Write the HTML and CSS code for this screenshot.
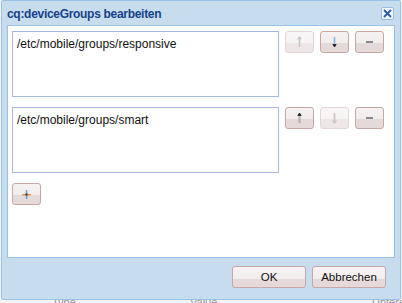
FILE: index.html
```html
<!DOCTYPE html>
<html>
<head>
<meta charset="utf-8">
<link rel="stylesheet" href="styles.css">
</head>
<body>
<div class="page">
  <div class="win">
    <div class="head">
      <span class="title">cq:deviceGroups bearbeiten</span>
      <span class="close">
        <svg width="11" height="11" viewBox="0 0 11 11"><path d="M2 2 L9 9 M9 2 L2 9" stroke="#2a5aa8" stroke-width="1.8" fill="none"/></svg>
      </span>
    </div>
    <div class="body">
      <div class="row">
        <div class="field">/etc/mobile/groups/responsive</div>
        <div class="tools">
          <span class="btn dis"><svg width="7" height="12" viewBox="0 0 7 12"><path d="M3.5 1 L3.5 11" stroke="#c9c4c4" stroke-width="1.6"/><path d="M1.5 3.5 L3.5 1 L5.5 3.5" stroke="#c9c4c4" stroke-width="1.2" fill="none"/></svg></span>
          <span class="btn"><svg width="7" height="12" viewBox="0 0 7 12"><path d="M3.5 1 L3.5 9" stroke="#8fb6dc" stroke-width="1.6"/><path d="M1.8 8.5 L3.5 11 L5.2 8.5 Z" fill="#222" stroke="#222" stroke-width="0.8"/></svg></span>
          <span class="btn"><svg width="7" height="4" viewBox="0 0 7 4"><rect x="0" y="1" width="7" height="2" fill="#8a8a8a"/></svg></span>
        </div>
      </div>
      <div class="row">
        <div class="field">/etc/mobile/groups/smart</div>
        <div class="tools">
          <span class="btn"><svg width="7" height="12" viewBox="0 0 7 12"><path d="M3 3 L3 11" stroke="#e8a048" stroke-width="1"/><path d="M4 3 L4 11" stroke="#7fa9d6" stroke-width="1"/><path d="M1.8 3.5 L3.5 1 L5.2 3.5 Z" fill="#222" stroke="#222" stroke-width="0.8"/></svg></span>
          <span class="btn dis"><svg width="7" height="12" viewBox="0 0 7 12"><path d="M3.5 1 L3.5 11" stroke="#c9c4c4" stroke-width="1.6"/><path d="M1.5 8.5 L3.5 11 L5.5 8.5" stroke="#c9c4c4" stroke-width="1.2" fill="none"/></svg></span>
          <span class="btn"><svg width="7" height="4" viewBox="0 0 7 4"><rect x="0" y="1" width="7" height="2" fill="#8a8a8a"/></svg></span>
        </div>
      </div>
      <span class="btn add"><svg width="9" height="9" viewBox="0 0 9 9"><rect x="0" y="4" width="9" height="1.5" fill="#e59a3c"/><rect x="3.8" y="0" width="1.5" height="9" fill="#6f9fd2"/><rect x="3.5" y="3.5" width="2" height="2" fill="#333"/></svg></span>
    </div>
    <div class="foot">
      <span class="fbtn">OK</span>
      <span class="fbtn">Abbrechen</span>
    </div>
  </div>
  <div class="under">
    <span class="u1">Type</span>
    <span class="u2">Value</span>
    <span class="u3">Untere</span>
  </div>
</div>
</body>
</html>
```
FILE: styles.css
```css
* { box-sizing: border-box; }
html, body { margin: 0; padding: 0; }
body {
  background: #ffffff;
  font-family: "Liberation Sans", Arial, sans-serif;
  width: 402px;
  height: 303px;
  overflow: hidden;
}
.page {
  position: relative;
  width: 402px;
  height: 303px;
  background: #f4f4f4;
}
.win {
  position: relative;
  z-index: 1;
  margin-left: 1px;
  width: 400px;
  height: 300px;
  background: #c7ddee;
  border: 1px solid #99c2e8;
  border-radius: 2px;
  display: flex;
  flex-direction: column;
}
.head {
  height: 24px;
  display: flex;
  align-items: center;
  justify-content: space-between;
  padding: 0 5px 0 5px;
}
.title {
  font-weight: bold;
  font-size: 12px;
  letter-spacing: -0.3px;
  color: #15428b;
  padding-top: 1px;
}
.close {
  width: 13px;
  height: 13px;
  background: #f2f7fc;
  border: 1px solid #99bbe8;
  border-radius: 2px;
  display: flex;
  align-items: center;
  justify-content: center;
  margin-right: 1px;
}
.body {
  margin: 0 5px 0 5px;
  height: 233px;
  background: #ffffff;
  border: 1px solid #99c2e8;
  padding: 5px 0 0 4px;
  display: flex;
  flex-direction: column;
  align-items: flex-start;
}
.row {
  display: flex;
  gap: 6px;
  margin-bottom: 10px;
}
.field {
  width: 267px;
  height: 66px;
  border: 1px solid #a7b8dd;
  font-size: 12px;
  color: #111;
  padding: 5px 4px;
  line-height: 14px;
}
.tools {
  display: flex;
  gap: 6px;
}
.btn {
  width: 29px;
  height: 22px;
  border: 1px solid #c8a6a6;
  border-radius: 3px;
  background: linear-gradient(to bottom, #f6f2f2 0%, #f2eded 55%, #e6d9d9 55%, #e6d9d9 100%);
  display: flex;
  align-items: center;
  justify-content: center;
}
.btn.dis {
  border-color: #e4d6d6;
  background: linear-gradient(to bottom, #f8f6f6 0%, #f6f3f3 55%, #efe7e7 55%, #efe7e7 100%);
}
.add {
  margin-top: 0;
}
.foot {
  display: flex;
  justify-content: flex-end;
  gap: 6px;
  padding: 8px 14px 0 0;
}
.fbtn {
  width: 74px;
  height: 22px;
  border: 1px solid #c8a6a6;
  border-radius: 3px;
  background: linear-gradient(to bottom, #f7f3f3 0%, #f2eded 62%, #e6d9d9 62%, #e6d9d9 100%);
  font-size: 11.5px;
  color: #111;
  display: flex;
  align-items: center;
  justify-content: center;
  padding-bottom: 1px;
}
.under {
  position: absolute;
  left: 0;
  top: 296px;
  width: 402px;
  height: 10px;
  font-size: 11px;
  color: #999;
}
.under span { position: absolute; top: 0; }
.u1 { left: 52px; }
.u2 { left: 190px; }
.u3 { left: 372px; }
```
